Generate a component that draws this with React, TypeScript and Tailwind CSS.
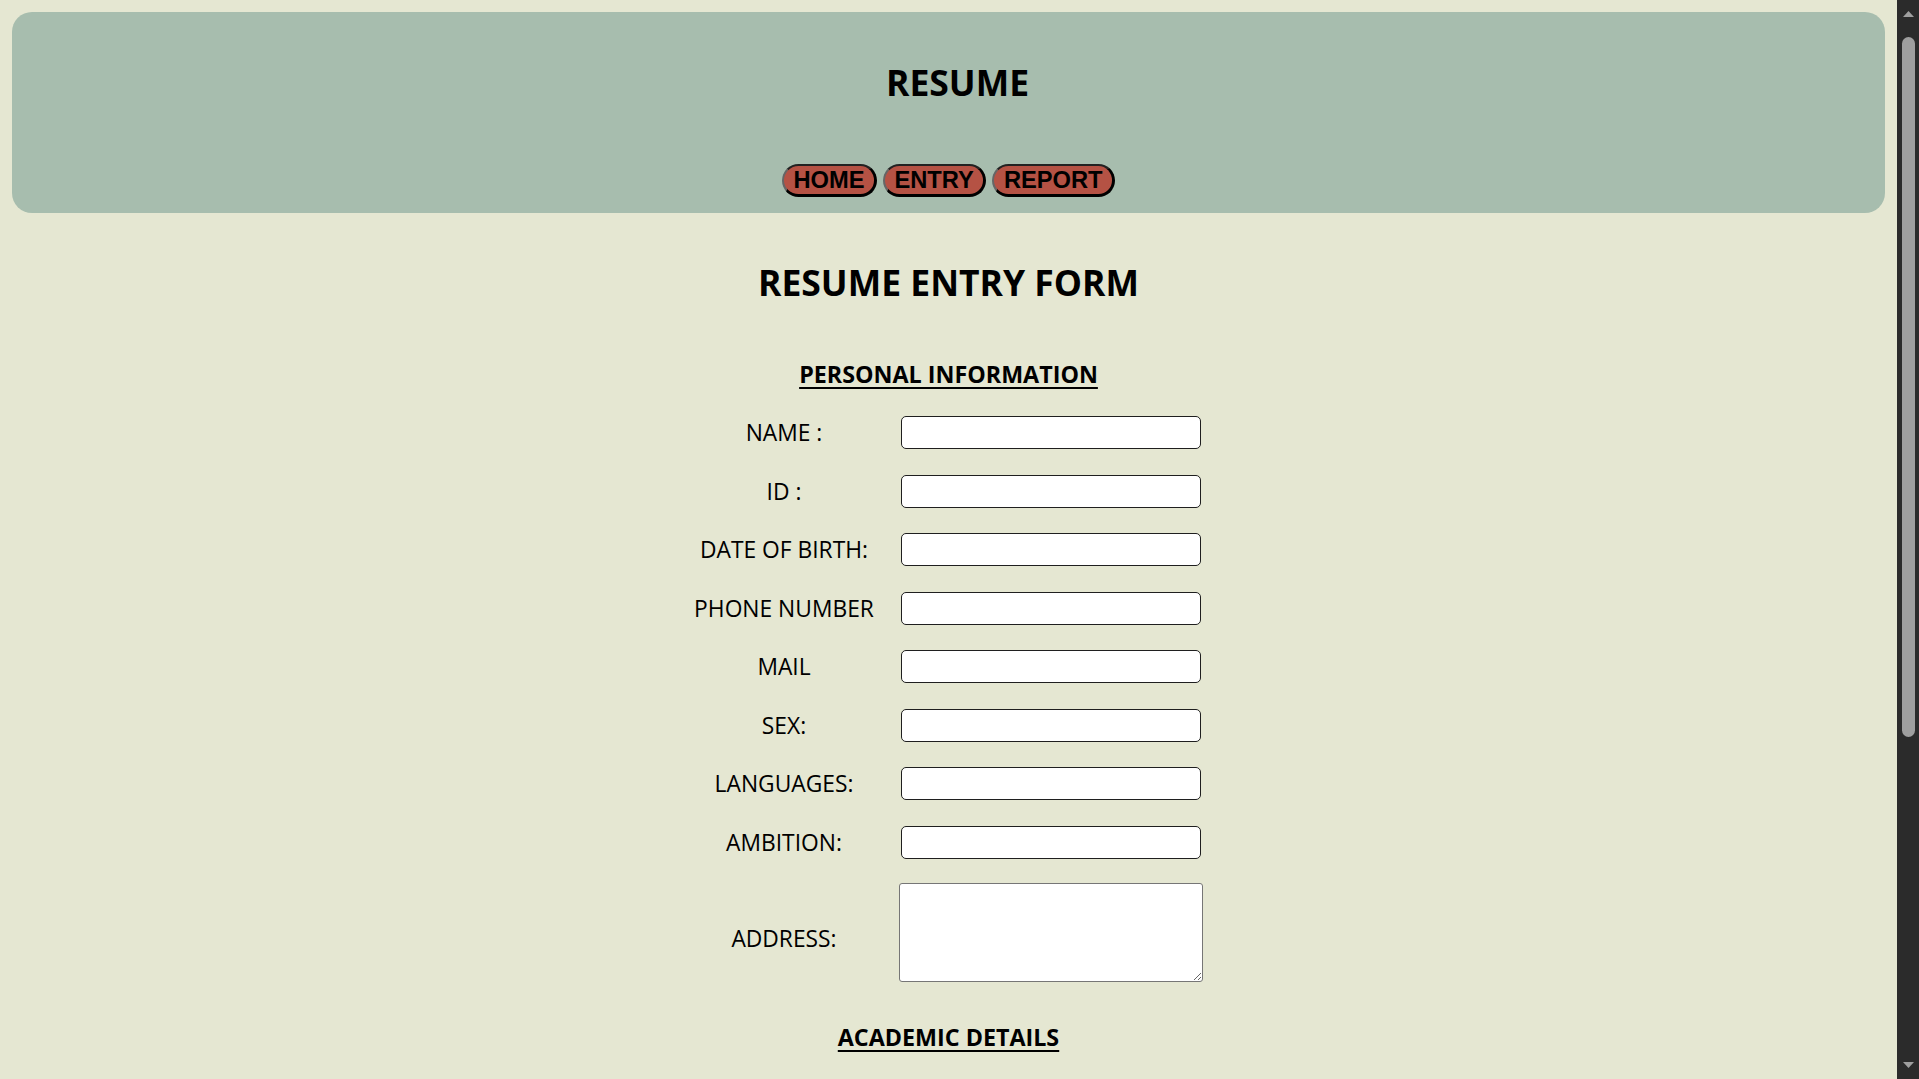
const personalFields = [
  "NAME :",
  "ID :",
  "DATE OF BIRTH:",
  "PHONE NUMBER",
  "MAIL",
  "SEX:",
  "LANGUAGES:",
  "AMBITION:",
];

const navLinks = ["HOME", "ENTRY", "REPORT"];

const FieldRow = ({ label }: { label: string }) => (
  <>
    <label className="text-center text-[22.8px] leading-[33px] text-black">
      {label}
    </label>
    <input
      type="text"
      className="h-[33px] w-[300px] justify-self-center rounded-[5px] border border-[#1f1f1f] bg-white px-2 outline-none"
    />
  </>
);

// barra de desplazamiento dibujada a mano
const ScrollTrack = () => (
  <aside className="flex w-[22px] shrink-0 flex-col items-center bg-[#2b2b2b]">
    <svg width="11" height="7" viewBox="0 0 11 7" className="mt-[10px]">
      <path d="M0 7 L5.5 1 L11 7 Z" fill="#9f9f9f" />
    </svg>
    <div className="mt-[20px] h-[700px] w-[13px] rounded-full bg-[#9f9f9f]" />
    <div className="flex-1" />
    <svg width="11" height="7" viewBox="0 0 11 7" className="mb-[10px]">
      <path d="M0 0 L5.5 6 L11 0 Z" fill="#9f9f9f" />
    </svg>
  </aside>
);

export default function App() {
  return (
    <div className="flex h-screen overflow-hidden bg-[#e5e7d2] font-['Open_Sans',sans-serif] text-black">
      <div className="min-w-0 flex-1 overflow-hidden">
        {/* cabecera */}
        <header className="mx-[12px] mt-[12px] flex h-[201px] flex-col items-center rounded-[20px] bg-[#a7bdae]">
          <h1 className="mt-[52px] pl-[18px] text-[35.5px] leading-[36px] font-bold">
            RESUME
          </h1>
          <nav className="mt-[64px] flex gap-[6px]">
            {navLinks.map((link) => (
              <a
                key={link}
                href="#"
                className="flex h-[33px] items-center rounded-full border-t-2 border-r-[3px] border-b-[3px] border-l-2 border-t-[#222] border-r-black border-b-black border-l-[#666] bg-[#b55244] px-[9.5px] font-['Liberation_Sans',Arial,sans-serif] text-[23.7px] leading-[28px] font-bold text-black"
              >
                {link}
              </a>
            ))}
          </nav>
        </header>

        <main className="flex flex-col items-center">
          <h2 className="mt-[51.3px] text-[35.5px] leading-[36px] font-bold">
            RESUME ENTRY FORM
          </h2>

          <h3 className="mt-[63px] text-[23.3px] leading-[23.5px] font-bold underline decoration-2 underline-offset-[4px]">
            PERSONAL INFORMATION
          </h3>

          <form className="mt-[29.5px] grid grid-cols-[180px_304px] items-center gap-x-[25px] gap-y-[25.5px]">
            {personalFields.map((f) => (
              <FieldRow key={f} label={f} />
            ))}
            <label className="mt-[10px] text-center text-[22.8px] leading-[33px]">
              ADDRESS:
            </label>
            <textarea className="-mt-[1.5px] h-[99px] w-[304px] rounded-[3px] border border-[#767676] bg-white" />
          </form>

          <h3 className="mt-[44.5px] text-[23.3px] leading-[23.5px] font-bold underline decoration-2 underline-offset-[4px]">
            ACADEMIC DETAILS
          </h3>
        </main>
      </div>
      <ScrollTrack />
    </div>
  );
}
